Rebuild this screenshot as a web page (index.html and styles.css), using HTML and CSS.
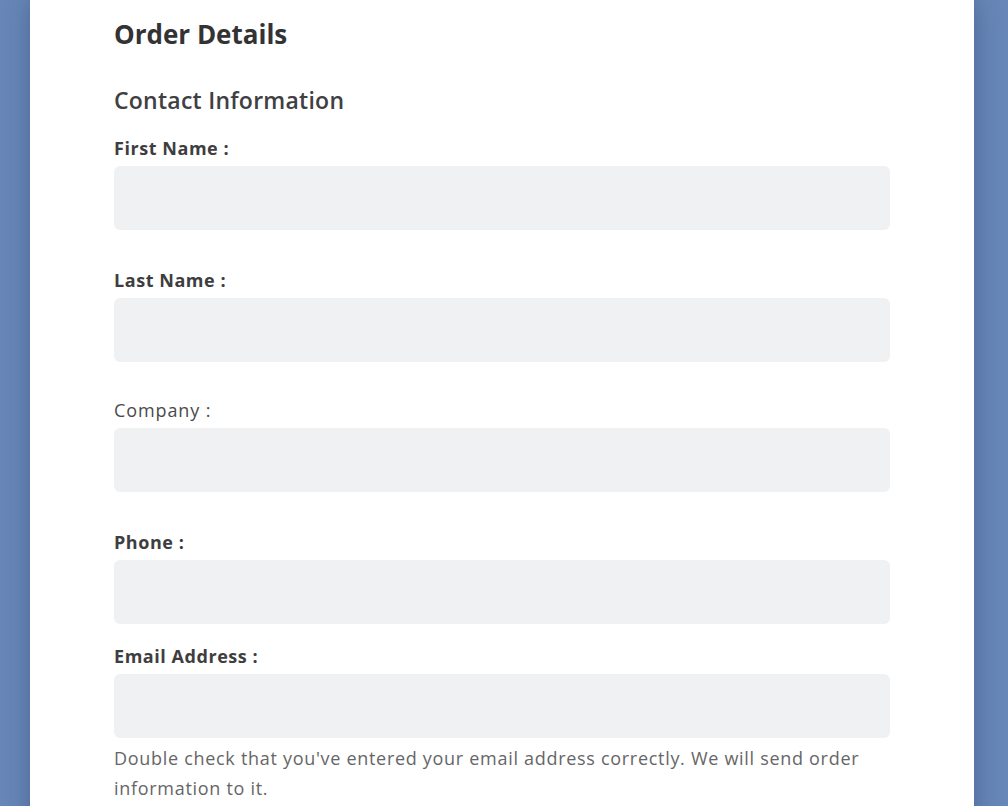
FILE: index.html
```html
<!DOCTYPE html>
<html lang="en">
<head>
<meta charset="utf-8">
<title>Order Details</title>
<link rel="stylesheet" href="styles.css">
</head>
<body>
<div class="page">
  <main class="card">
    <h1 class="title">Order Details</h1>
    <h2 class="section-title">Contact Information</h2>
    <form class="form">
      <div class="field">
        <label class="label label-bold" for="first">First Name :</label>
        <input class="input" id="first" type="text">
      </div>
      <div class="field field-snug">
        <label class="label label-bold" for="last">Last Name :</label>
        <input class="input" id="last" type="text">
      </div>
      <div class="field">
        <label class="label" for="company">Company :</label>
        <input class="input" id="company" type="text">
      </div>
      <div class="field field-tight">
        <label class="label label-bold" for="phone">Phone :</label>
        <input class="input" id="phone" type="text">
      </div>
      <div class="field">
        <label class="label label-bold" for="email">Email Address :</label>
        <input class="input" id="email" type="email">
        <p class="help">Double check that you've entered your email address correctly. We will send order information to it.</p>
      </div>
    </form>
  </main>
</div>
</body>
</html>
```
FILE: styles.css
```css
html, body {
  margin: 0;
  padding: 0;
  height: 100%;
  overflow: hidden;
}
body {
  background: #6787b8;
  font-family: "Open Sans", Lato, sans-serif;
  color: #3b3b3d;
}
.page {
  padding-left: 30px;
}
.card {
  width: 944px;
  box-sizing: border-box;
  min-height: 900px;
  background: #ffffff;
  padding: 14px 84px 0;
  box-shadow: 0 0 24px rgba(20, 40, 80, 0.35);
}
.title {
  margin: 0;
  font-size: 26px;
  line-height: 40px;
  font-weight: 700;
  color: #333335;
}
.section-title {
  margin: 28px 0 0;
  font-size: 23px;
  line-height: 36px;
  font-weight: 600;
  letter-spacing: 0.25px;
  color: #404042;
}
.form {
  margin-top: 18px;
}
.field {
  margin-bottom: 38px;
}
.field-snug {
  margin-bottom: 36px;
}
.field-tight {
  margin-bottom: 20px;
}
.label {
  display: block;
  font-size: 18px;
  line-height: 24px;
  margin-bottom: 6px;
  color: #4a4a4c;
  letter-spacing: 0.9px;
}
.label-bold {
  font-weight: 700;
  color: #3e3e40;
  letter-spacing: 0.55px;
}
.input {
  display: block;
  width: 100%;
  height: 64px;
  box-sizing: border-box;
  border: none;
  border-radius: 6px;
  background: #f0f1f3;
  padding: 0 16px;
  font: inherit;
}
.help {
  margin: 5px 0 0;
  font-size: 18px;
  line-height: 30px;
  color: #666668;
  letter-spacing: 0.7px;
}
```
